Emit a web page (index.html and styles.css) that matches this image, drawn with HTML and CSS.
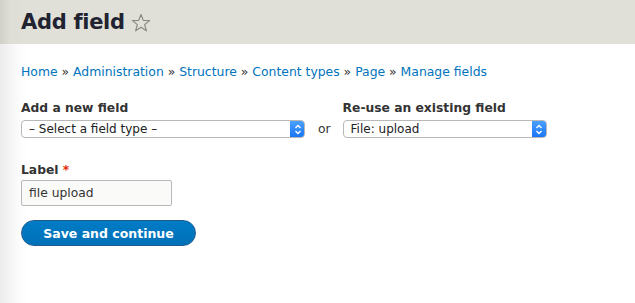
FILE: index.html
```html
<!DOCTYPE html>
<html lang="en">
<head>
  <meta charset="UTF-8" />
  <title>Add field</title>
  <link rel="stylesheet" href="styles.css">
</head>
<body>

<div class="cabecera">
  <h1 class="titulo">Add field</h1>
  <svg class="estrella" width="20" height="20" viewBox="0 0 20 20">
    <path d="M10 1.5 L12.3 7.4 L18.6 7.6 L13.6 11.6 L15.4 17.8 L10 14.3 L4.6 17.8 L6.4 11.6 L1.4 7.6 L7.7 7.4 Z" fill="none" stroke="#8a8a80" stroke-width="1.2" stroke-linejoin="round"/>
  </svg>
</div>

<div class="contenido">
  <nav class="migas">
    <a href="#">Home</a> » <a href="#">Administration</a> » <a href="#">Structure</a> » <a href="#">Content types</a> » <a href="#">Page</a> » <a href="#">Manage fields</a>
  </nav>

  <form class="formulario">
    <div class="fila-campos">
      <div class="campo">
        <label class="etiqueta">Add a new field</label>
        <div class="selector selector-ancho">
          <span>– Select a field type –</span>
          <span class="flechas"><svg width="8" height="11" viewBox="0 0 8 11"><path d="M1.5 4 L4 1.5 L6.5 4 M1.5 7 L4 9.5 L6.5 7" fill="none" stroke="#fff" stroke-width="1.4"/></svg></span>
        </div>
      </div>
      <span class="separador">or</span>
      <div class="campo">
        <label class="etiqueta">Re-use an existing field</label>
        <div class="selector selector-medio">
          <span>File: upload</span>
          <span class="flechas"><svg width="8" height="11" viewBox="0 0 8 11"><path d="M1.5 4 L4 1.5 L6.5 4 M1.5 7 L4 9.5 L6.5 7" fill="none" stroke="#fff" stroke-width="1.4"/></svg></span>
        </div>
      </div>
    </div>

    <div class="campo campo-label">
      <label class="etiqueta" for="label">Label <span class="obligatorio">*</span></label>
      <input class="entrada" type="text" id="label" value="file upload" />
    </div>

    <button type="button" class="boton">Save and continue</button>
  </form>
</div>

</body>
</html>
```

FILE: styles.css
```css
html, body {
  margin: 0;
  padding: 0;
  height: 100%;
  font-family: 'DejaVu Sans', Verdana, sans-serif;
  color: #222;
}

body {
  background: linear-gradient(to right, #ececec 0, #fbfbfb 18px, #fff 28px);
}

.cabecera {
  height: 44px;
  background: linear-gradient(to right, #d0d0c8 0, #deded6 10px, #e0e0d8 24px);
  display: flex;
  align-items: center;
  padding-left: 21px;
  box-sizing: border-box;
}

.titulo {
  margin: 0;
  font-size: 21px;
  font-weight: bold;
  color: #222330;
  letter-spacing: -0.3px;
}

.estrella {
  margin-left: 6px;
  margin-top: 2px;
}

.contenido {
  padding: 20px 21px 0;
}

.migas {
  font-size: 12.4px;
  color: #333;
  line-height: 16px;
}

.migas a {
  color: #0074bd;
  text-decoration: none;
}

.formulario {
  margin-top: 20px;
}

.fila-campos {
  display: flex;
  align-items: flex-end;
}

.campo {
  display: flex;
  flex-direction: column;
}

.etiqueta {
  font-size: 12.3px;
  font-weight: bold;
  color: #333;
  line-height: 16px;
  margin-bottom: 4px;
}

.selector {
  height: 18px;
  box-sizing: border-box;
  border: 1px solid #b8b8b8;
  border-radius: 4px;
  background: #fff;
  display: flex;
  align-items: center;
  justify-content: space-between;
  font-size: 12px;
  color: #222;
  padding-left: 7px;
  overflow: hidden;
}

.selector-ancho {
  width: 284px;
}

.selector-medio {
  width: 204px;
}

.flechas {
  width: 15px;
  height: 18px;
  background: linear-gradient(#4da3ff, #1873f4);
  display: flex;
  align-items: center;
  justify-content: center;
  border-radius: 0 4px 4px 0;
  margin-right: -1px;
}

.separador {
  font-size: 12.3px;
  color: #333;
  margin: 0 12px 1px 13px;
  line-height: 16px;
}

.campo-label {
  margin-top: 24px;
  align-items: flex-start;
}

.campo-label .etiqueta {
  margin-bottom: 2px;
}

.obligatorio {
  color: #e62600;
}

.entrada {
  width: 151px;
  height: 26px;
  box-sizing: border-box;
  border: 1px solid #b8b8b8;
  border-radius: 2px;
  background: #fafaf8;
  font-family: 'DejaVu Sans', Verdana, sans-serif;
  font-size: 12.3px;
  color: #333;
  padding: 0 7px;
  margin: 0;
}

.boton {
  display: block;
  margin-top: 14px;
  width: 175px;
  height: 26px;
  border: 1px solid #1e5c90;
  border-radius: 13px;
  background: linear-gradient(#007bc6, #0071b8);
  color: #fff;
  font-family: 'DejaVu Sans', Verdana, sans-serif;
  font-size: 12.5px;
  font-weight: bold;
  padding: 0;
  cursor: pointer;
}
```
